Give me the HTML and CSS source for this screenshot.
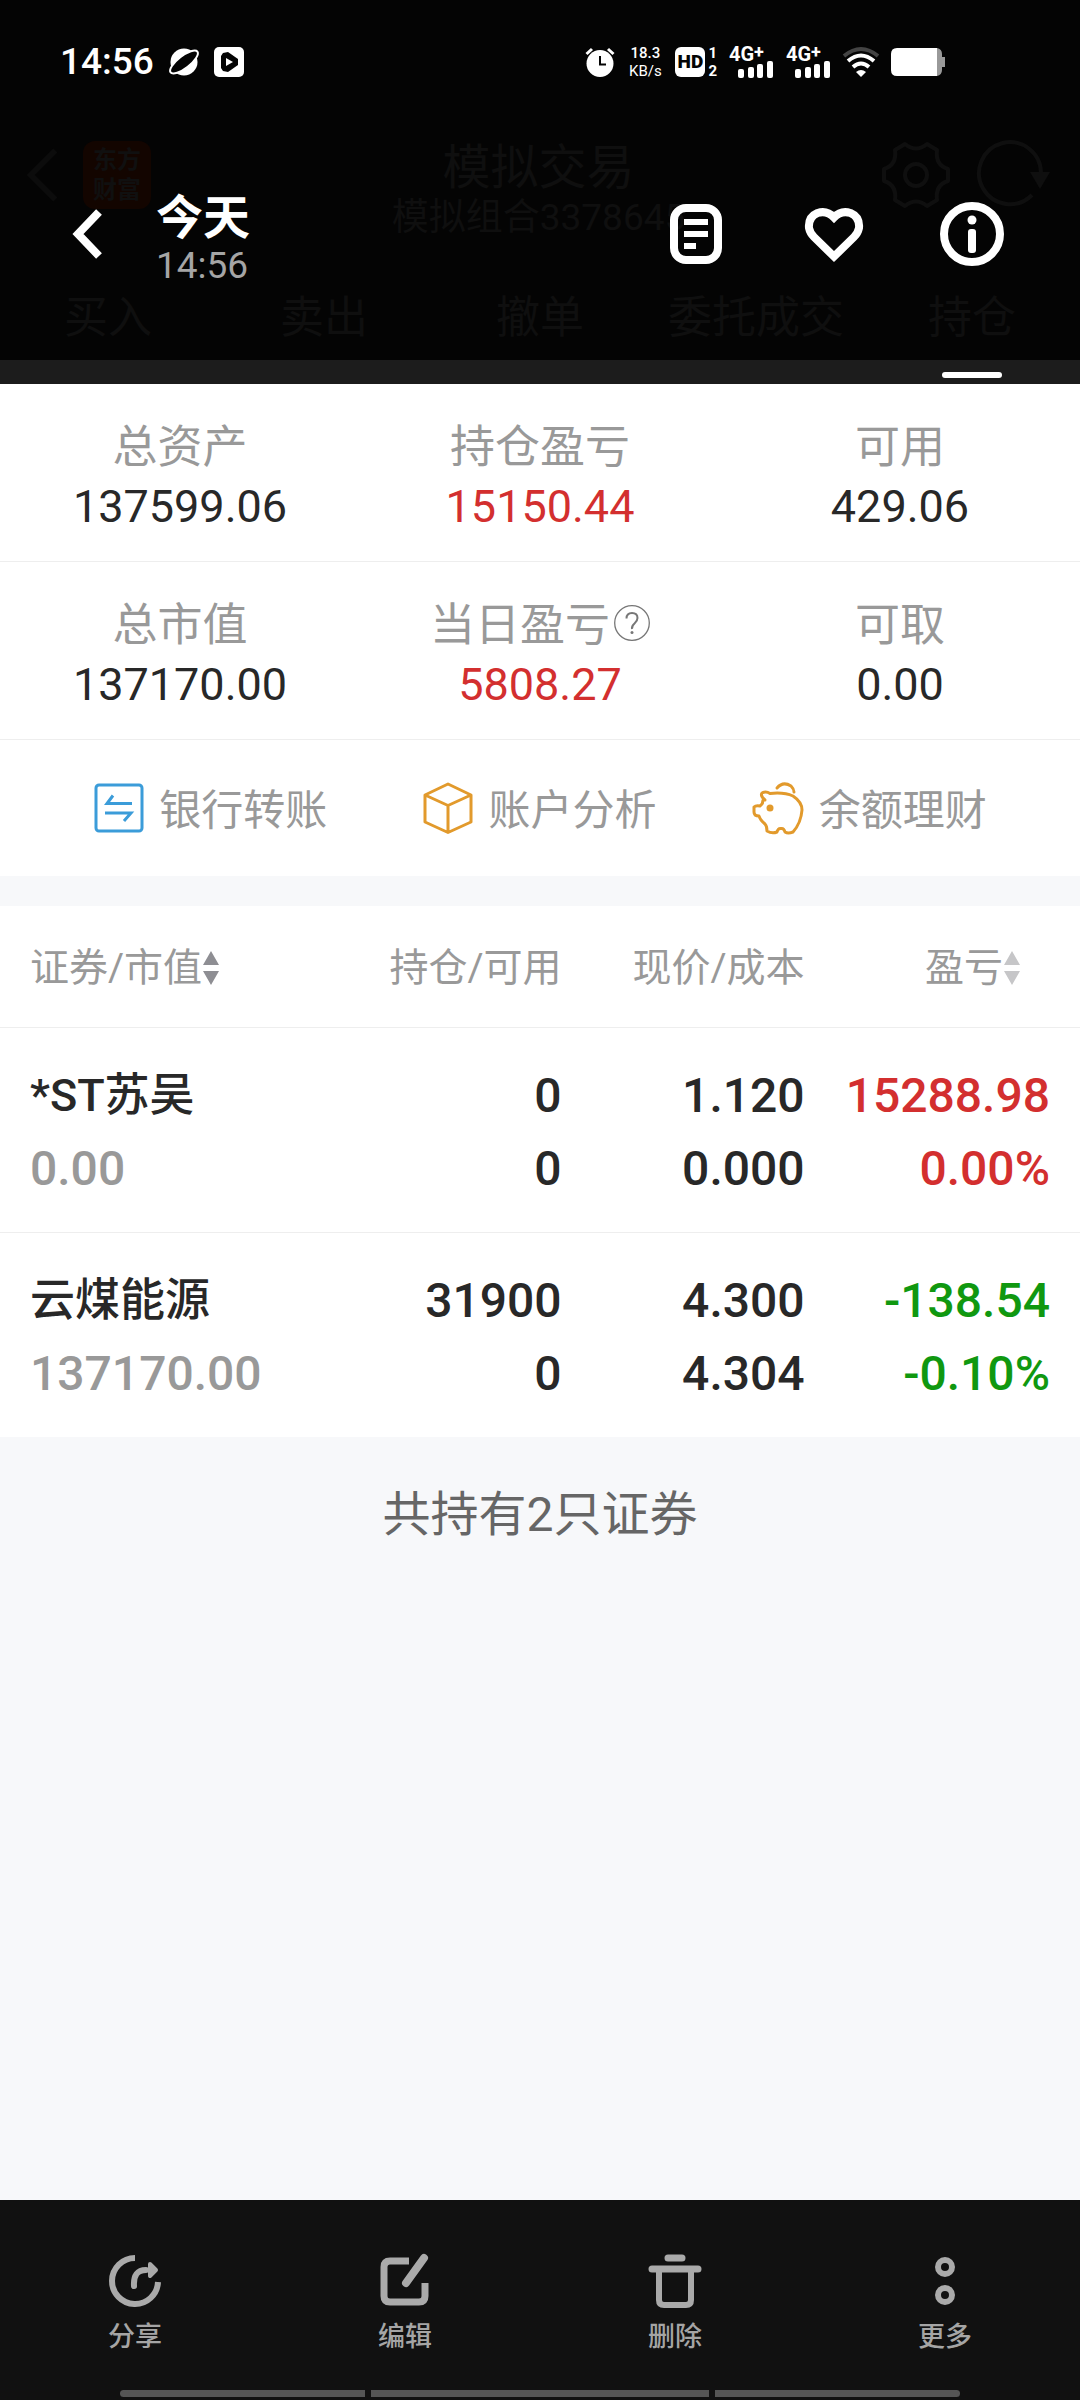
FILE: index.html
```html
<!DOCTYPE html>
<html lang="zh-CN">
<head>
	<meta charset="UTF-8">
	<meta name="viewport" content="width=device-width, initial-scale=1">
	<title>今天 14:56</title>
	<link rel="stylesheet" href="styles.css">
</head>
<body>

<header class="top">
	<!-- app header, dimmed -->
	<div class="app-nav">
		<div class="app-left">
			<svg class="app-back" viewBox="0 0 34 60"><path d="M30 4L4 30l26 26" fill="none" stroke="#0c0c0c" stroke-width="6"/></svg>
			<div class="app-logo">东方<br>财富</div>
		</div>
		<div class="app-title">
			<h1>模拟交易</h1>
			<p>模拟组合3378645</p>
		</div>
		<div class="app-right">
			<svg width="68" height="68" viewBox="0 0 68 68" fill="none" stroke="#0f0f0f" stroke-width="4" stroke-linejoin="round">
				<path d="M23 3Q34 12 45 3L55 9Q53 24 66 28V40Q53 44 55 59L45 65Q34 56 23 65L13 59Q15 44 2 40V28Q15 24 13 9Z"/>
				<circle cx="34" cy="34" r="11"/>
			</svg>
			<svg width="72" height="68" viewBox="0 0 72 68">
				<path d="M54 54A31 31 0 1 1 63 32" fill="none" stroke="#0f0f0f" stroke-width="4"/>
				<path d="M52 31h20L62 48z" fill="#0f0f0f"/>
			</svg>
		</div>
	</div>
	<nav class="app-tabs">
		<a href="#">买入</a>
		<a href="#">卖出</a>
		<a href="#">撤单</a>
		<a href="#">委托成交</a>
		<a href="#">持仓</a>
	</nav>
	<div class="tab-line"><span></span></div>

	<!-- phone status + viewer bar -->
	<div class="overlay">
		<div class="status">
			<span class="clock">14:56</span>
			<svg class="planet" width="30" height="30" viewBox="0 0 30 30">
				<circle cx="15" cy="15" r="13.500" fill="#fff"/>
				<ellipse cx="15" cy="15" rx="17" ry="6" transform="rotate(-38 15 15)" fill="#040404" stroke="#fff" stroke-width="2"/>
			</svg>
			<svg class="play" width="30" height="30" viewBox="0 0 30 30">
				<rect width="30" height="30" rx="5" fill="#fff"/>
				<path d="M9 6l5-1 10 7v6l-10 7-5-1-2-3V9z" fill="#040404"/>
				<path d="M12 11l7 4-7 4z" fill="#fff"/>
			</svg>
			<div class="status-right">
				<svg width="30" height="30" viewBox="0 0 30 30">
					<circle cx="15" cy="16.500" r="13.500" fill="#fff"/>
					<path d="M1.500 7L7 2M28.500 7L23 2" stroke="#fff" stroke-width="3"/>
					<path d="M15 9v8.500h6" fill="none" stroke="#040404" stroke-width="2"/>
				</svg>
				<div class="speed"><b>18.3</b><span>KB/s</span></div>
				<div class="hd"><b>HD</b><span>1<br>2</span></div>
				<div class="signal"><b>4G<sup>+</sup></b>
					<svg width="36" height="18" viewBox="0 0 36 18" fill="#fff"><rect y="9" width="6" height="9" rx="2"/><rect x="10" y="7" width="6" height="11" rx="2"/><rect x="19" y="4" width="6" height="14" rx="2"/><rect x="29" y="1" width="6" height="17" rx="2"/></svg>
				</div>
				<div class="signal"><b>4G<sup>+</sup></b>
					<svg width="36" height="18" viewBox="0 0 36 18" fill="#fff"><rect y="9" width="6" height="9" rx="2"/><rect x="10" y="7" width="6" height="11" rx="2"/><rect x="19" y="4" width="6" height="14" rx="2"/><rect x="29" y="1" width="6" height="17" rx="2"/></svg>
				</div>
				<svg width="36" height="30" viewBox="0 0 36 30" fill="none" stroke-width="4">
					<path d="M1 9Q18-5 35 9" stroke="#444"/>
					<path d="M5 14Q18 3 31 14M10 20Q18 13 26 20" stroke="#fff"/>
					<path d="M13 25Q18 21 23 25L18 30z" fill="#fff"/>
				</svg>
				<svg width="54" height="28" viewBox="0 0 54 28">
					<path d="M46 0Q51 1 51 6V9h3v10h-3v3Q51 27 46 28z" fill="#999"/>
					<path d="M6 0h40v28H6Q0 28 0 22V6Q0 0 6 0z" fill="#fff"/>
				</svg>
			</div>
		</div>
		<div class="viewer">
			<button class="icon-btn back" aria-label="返回"><svg width="32" height="50" viewBox="0 0 32 50"><path d="M27 3L6 25l21 22" fill="none" stroke="#fff" stroke-width="8"/></svg></button>
			<div class="when">
				<h2>今天</h2>
				<time>14:56</time>
			</div>
			<div class="viewer-icons">
				<button class="icon-btn" aria-label="文字"><svg width="64" height="64" viewBox="0 0 64 64">
					<rect x="10" y="6" width="44" height="52" rx="12" fill="none" stroke="#fff" stroke-width="8"/>
					<path d="M20 20h24M20 32h24M20 44h12" stroke="#fff" stroke-width="6"/>
				</svg></button>
				<button class="icon-btn" aria-label="收藏"><svg width="64" height="64" viewBox="0 0 64 64">
					<path d="M32 15.500Q25 8 15.500 11Q6 15 7 26Q8 31 12 35L32 54.500L52 35Q56 31 57 26Q58 15 48.500 11Q39 8 32 15.500z" fill="none" stroke="#fff" stroke-width="8"/>
				</svg></button>
				<button class="icon-btn" aria-label="详情"><svg width="64" height="64" viewBox="0 0 64 64">
					<circle cx="32" cy="32" r="28" fill="none" stroke="#fff" stroke-width="8"/>
					<circle cx="32" cy="18" r="4.500" fill="#fff"/>
					<rect x="28" y="27" width="8" height="24" rx="3" fill="#fff"/>
				</svg></button>
			</div>
		</div>
	</div>
</header>

<main>
	<section class="summary">
		<dl><dt>总资产</dt><dd>137599.06</dd></dl>
		<dl><dt>持仓盈亏</dt><dd class="up">15150.44</dd></dl>
		<dl><dt>可用</dt><dd>429.06</dd></dl>
		<dl><dt>总市值</dt><dd>137170.00</dd></dl>
		<dl><dt>当日盈亏<svg width="36" height="36" viewBox="0 0 36 36" fill="none" stroke="#777">
			<circle cx="18" cy="15" r="17.300" stroke-width="1.300"/>
			<path d="M12.500 10.500Q12.500 5 18 5T23.500 10Q23.500 13 20.500 15.500T18 21" stroke-width="2"/>
			<circle cx="18" cy="24.500" r="1.500" fill="#777" stroke="none"/>
		</svg></dt><dd class="up">5808.27</dd></dl>
		<dl><dt>可取</dt><dd>0.00</dd></dl>
	</section>

	<nav class="links">
		<a href="#">
			<svg width="50" height="52" viewBox="0 0 50 52" fill="none" stroke="#3b9cd9">
				<rect x="2" y="3" width="46" height="46" rx="3" stroke-width="3"/>
				<path d="M38 21.500H13l6-8M11 31h26l-7 8" stroke-width="3"/>
			</svg><span>银行转账</span></a>
		<a href="#">
			<svg width="50" height="52" viewBox="0 0 50 52" fill="none" stroke="#e29a2c" stroke-width="3" stroke-linejoin="round">
				<path d="M25 2L48 13v27L25 50.500L2 40V13zM2 13l23 10.500L48 13M25 23.500v27"/>
			</svg><span>账户分析</span></a>
		<a href="#">
			<svg width="52" height="52" viewBox="0 0 52 52" fill="none" stroke="#e29a2c" stroke-width="3" stroke-linecap="round" stroke-linejoin="round">
				<path d="M13 18Q8 14 10 11Q14 9 18 11.500Q32 10 41 14Q50 20 50 28Q49 41 41 50Q36 52 33 50Q32 46 29 46.500Q26 46 25 50Q20 52 15 49Q15 44 13 42Q8 38 7 34Q2 34 2 30V25Q4 23 8 24Q11 22 11 18z"/>
				<path d="M25 6Q31-1 39 4Q42 7 42 10"/>
				<circle cx="18" cy="26" r="3.500" fill="#e29a2c" stroke="none"/>
			</svg><span>余额理财</span></a>
	</nav>

	<table class="stocks">
		<thead>
			<tr>
				<th><button>证券/市值<svg width="16" height="36" viewBox="0 0 16 36" fill="#8e8e93"><path d="M8 1l8 14H0zM0 21h16L8 35z"/></svg></button></th>
				<th>持仓/可用</th>
				<th>现价/成本</th>
				<th><button>盈亏<svg width="16" height="36" viewBox="0 0 16 36" fill="#c6c6c8"><path d="M8 1l8 14H0zM0 21h16L8 35z"/></svg></button></th>
			</tr>
		</thead>
		<tbody>
			<tr>
				<td><span class="name">*ST苏吴</span><span class="gray">0.00</span></td>
				<td><span>0</span><span>0</span></td>
				<td><span>1.120</span><span>0.000</span></td>
				<td class="up"><span>15288.98</span><span>0.00%</span></td>
			</tr>
			<tr>
				<td><span class="name">云煤能源</span><span class="gray">137170.00</span></td>
				<td><span>31900</span><span>0</span></td>
				<td><span>4.300</span><span>4.304</span></td>
				<td class="down"><span>-138.54</span><span>-0.10%</span></td>
			</tr>
		</tbody>
	</table>

	<p class="total">共持有2只证券</p>
</main>

<footer class="bottom">
	<div class="tools">
		<button>
			<svg width="56" height="56" viewBox="0 0 56 56" fill="none" stroke="#aaa" stroke-width="6">
				<path d="M28 5A23 23 0 1 0 51 29"/>
				<path d="M27 33Q26 17 39 17" stroke-linecap="round"/>
				<path d="M43 11l6 6-6 6z" fill="#aaa" stroke-width="4" stroke-linejoin="round"/>
			</svg>
			<span>分享</span></button>
		<button>
			<svg width="56" height="56" viewBox="0 0 56 56" fill="none" stroke="#aaa" stroke-width="7">
				<path d="M32 8H13Q7 8 7 14V43Q7 49 13 49H42Q48 49 48 43V30"/>
				<path d="M29 30L47 5" stroke-width="8" stroke-linecap="round"/>
			</svg>
			<span>编辑</span></button>
		<button>
			<svg width="56" height="56" viewBox="0 0 56 56" fill="none" stroke="#aaa" stroke-width="6">
				<path d="M21 5h14M5 16h46" stroke-width="7" stroke-linecap="round"/>
				<path d="M12 17V47Q12 52 17 52H39Q44 52 44 47V17"/>
			</svg>
			<span>删除</span></button>
		<button>
			<svg width="56" height="56" viewBox="0 0 56 56" fill="none" stroke="#aaa" stroke-width="6">
				<circle cx="28" cy="14" r="7"/>
				<circle cx="28" cy="42" r="7"/>
			</svg>
			<span>更多</span></button>
	</div>
	<div class="home-bar"><i></i><i></i><i></i></div>
</footer>

</body>
</html>
```
FILE: styles.css
```css
*{box-sizing: border-box;}
body,h1,h2,p,dl,dd{margin: 0;padding: 0;font-weight: 400;}
body{min-height: 100vh;display: flex;flex-direction: column;background: #f7f8fa;color: #282828;font-family: Roboto,"Noto Sans CJK SC",sans-serif;}
a{text-decoration: none;color: inherit;}
button{border: 0;padding: 0;margin: 0;background: none;font: inherit;color: inherit;}
svg{display: block;flex: none;overflow: visible;}

/* top */
.top{position: relative;background: #040404;color: #0f0f0f;padding-top: 138px;}
.app-nav{display: grid;grid-template-columns: 1fr auto 1fr;align-items: start;height: 100px;padding: 0 30px 0 27px;}
.app-left,.app-right{display: flex;align-items: center;padding-top: 3px;}
.app-right{justify-content: flex-end;gap: 28px;}
.app-back{width: 32px;height: 60px;}
.app-logo{margin-left: 24px;width: 68px;height: 68px;border-radius: 12px;background: #130500;color: #101010;font-size: 24px;font-weight: 700;line-height: 30px;padding-top: 4px;text-align: center;}
.app-title{text-align: center;}
.app-title h1{font-size: 48px;line-height: 60px;}
.app-title p{font-size: 37px;line-height: 40px;}
.app-tabs{display: grid;grid-template-columns: repeat(5,1fr);padding: 50px 0 12px;font-size: 44px;line-height: 60px;text-align: center;}
.tab-line{display: grid;grid-template-columns: repeat(5,1fr);height: 24px;background: #1c1c1c;padding-top: 12px;}
.tab-line span{grid-column: 5;justify-self: center;width: 60px;height: 6px;border-radius: 3px;background: #fff;}
.overlay{position: absolute;top: 0;left: 0;right: 0;color: #fff;}

.status{display: flex;align-items: center;height: 124px;padding: 0 135px 0 60px;}
.clock{font-size: 37px;line-height: 44px;font-weight: 500;}
.planet{margin-left: 15px;}
.play{margin-left: 15px;}
.status-right{margin-left: auto;display: flex;align-items: center;gap: 12px;}
.speed{display: flex;flex-direction: column;width: 36px;font-size: 15px;line-height: 18px;text-align: center;}
.speed b{font-weight: 500;}
.hd{display: flex;align-items: center;gap: 3px;font-weight: 700;font-size: 15px;line-height: 18px;}
.hd b{width: 30px;height: 30px;border-radius: 6px;background: #fff;color: #040404;font-size: 19px;line-height: 30px;text-align: center;}
.signal{width: 45px;height: 30px;display: flex;flex-direction: column;}
.signal b{font-size: 20px;line-height: 14px;height: 13px;white-space: nowrap;}
.signal sup{font-size: 18px;line-height: 0;vertical-align: 3px;}
.signal svg{margin-left: 9px;}

.viewer{display: flex;align-items: center;height: 96px;margin-top: 62px;padding: 0 76px 0 72px;}
.icon-btn{display: block;}
.when{margin-left: 52px;padding-top: 10px;}
.when h2{font-size: 47px;font-weight: 700;line-height: 54px;}
.when time{display: block;font-size: 37px;line-height: 42px;color: #a5a5a5;}
.viewer-icons{margin-left: auto;display: flex;gap: 74px;}

/* account */
.summary{display: grid;grid-template-columns: repeat(3,1fr);background: #fff;text-align: center;font-size: 45px;line-height: 58px;}
.summary dl{padding: 34px 0 25px;border-bottom: 1px solid #eee;}
.summary dt{display: flex;justify-content: center;align-items: center;gap: 4px;font-size: 45px;line-height: 60px;color: #999;}
.up{color: #d32f2f;}
.down{color: #109810;}
.links{display: grid;grid-template-columns: repeat(3,1fr);padding: 0 46px;height: 136px;background: #fff;color: #999;font-size: 42px;line-height: 60px;}
.links a{display: flex;align-items: center;justify-content: center;gap: 15px;}
.links span{padding-top: 6px;}

/* stocks */
.stocks{width: 100%;margin-top: 30px;background: #fff;border-collapse: collapse;table-layout: fixed;text-align: right;}
.stocks th{padding: 4px 0 0;height: 121px;font-size: 39px;line-height: 56px;font-weight: 400;color: #999;border-bottom: 1px solid #eee;}
.stocks th:nth-child(1){width: 28%;text-align: left;padding-left: 30px;}
.stocks th:nth-child(2){width: 24%;}
.stocks th:nth-child(3){width: 22.5%;}
.stocks th:nth-child(4){padding-right: 60px;}
.stocks th button{display: inline-flex;align-items: center;gap: 1px;white-space: nowrap;vertical-align: top;}
.stocks td{padding: 31px 0 27px;font-size: 48px;font-weight: 500;border-bottom: 1px solid #eee;}
.stocks td:first-child{text-align: left;padding-left: 30px;}
.stocks td:last-child{padding-right: 30px;}
.stocks tr:last-child td{border-bottom: 0;}
.stocks td span{display: block;line-height: 73px;white-space: nowrap;}
.stocks td .name{font-size: 45px;}
.stocks td .gray{color: #999;}
.total{padding-top: 48px;text-align: center;font-size: 48px;line-height: 60px;color: #666;}

/* bottom */
.bottom{margin-top: auto;background: #111;color: #a5a5a5;padding: 53px 0 3px;}
.tools{display: grid;grid-template-columns: repeat(4,1fr);}
.tools button{display: flex;flex-direction: column;align-items: center;gap: 10px;font-size: 27px;font-weight: 500;line-height: 36px;}
.home-bar{display: grid;grid-template-columns: 245fr 338fr 245fr;gap: 6px;padding: 35px 120px 0;}
.home-bar i{height: 7px;background: #555;}
.home-bar i:first-child{border-radius: 4px 0 0 4px;}
.home-bar i:last-child{border-radius: 0 4px 4px 0;}
```
